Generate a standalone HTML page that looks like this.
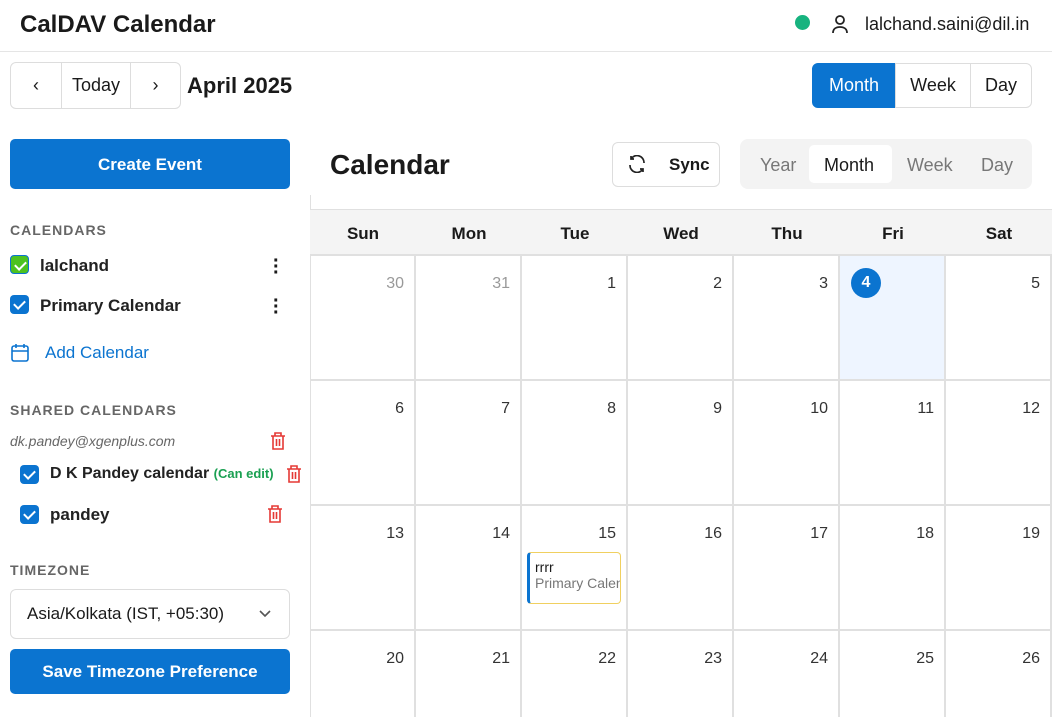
<!DOCTYPE html><html><head><style>
*{box-sizing:border-box;margin:0;padding:0}
html,body{width:1052px;height:717px;overflow:hidden}
body{background:#fff;font-family:"Liberation Sans","DejaVu Sans",sans-serif;color:#1a1a1a;position:relative}
.a{position:absolute}
.btn{position:absolute;border:1px solid #ddd;background:#fff;display:flex;align-items:center;justify-content:center;font-size:18px}
.cell{position:absolute;border-right:2px solid #e0e0e0;border-bottom:2px solid #e0e0e0;width:106px;height:125px}
.n{position:absolute;right:10px;top:19px;font-size:16px;color:#333}
.hd{position:absolute;top:210px;height:46px;width:106px;text-align:center;line-height:48px;font-size:17px;font-weight:bold;background:#f4f4f4;border-bottom:2px solid #e0e0e0}
.cb{position:absolute;width:19px;height:19px;border-radius:4px;background:#0b74d0}
.cb:after{content:"";position:absolute;left:6px;top:3px;width:5px;height:9px;border:solid #fff;border-width:0 2px 2px 0;transform:rotate(45deg)}
.lbl{position:absolute;font-size:17px;font-weight:bold;color:#222}
.sec{position:absolute;left:10px;font-size:14px;letter-spacing:1px;color:#666;font-weight:bold}
.dots{position:absolute;left:273px;width:4px;font-size:20px;font-weight:bold;line-height:6px}
</style></head><body>
<div class="a" style="left:20px;top:11px;font-size:24px;font-weight:bold">CalDAV Calendar</div>
<div class="a" style="left:795px;top:15px;width:15px;height:15px;border-radius:50%;background:#17b37f"></div>
<svg class="a" style="left:831px;top:14px" width="18" height="20" viewBox="0 0 18 20" fill="none" stroke="#222" stroke-width="1.8"><circle cx="9" cy="6" r="4"/><path d="M2 19c0-4 3-6 7-6s7 2 7 6"/></svg>
<div class="a" style="left:865px;top:14px;font-size:18px">lalchand.saini@dil.in</div>
<div class="a" style="left:0;top:51px;width:1052px;height:1px;background:#e5e5e5"></div>
<div class="btn" style="left:10px;top:62px;width:52px;height:47px;border-radius:6px 0 0 6px">‹</div>
<div class="btn" style="left:61px;top:62px;width:70px;height:47px">Today</div>
<div class="btn" style="left:130px;top:62px;width:51px;height:47px;border-radius:0 6px 6px 0">›</div>
<div class="a" style="left:187px;top:73px;font-size:22px;font-weight:bold">April 2025</div>
<div class="btn" style="left:812px;top:63px;width:84px;height:45px;background:#0b74d0;color:#fff;border-color:#0b74d0;border-radius:6px 0 0 6px">Month</div>
<div class="btn" style="left:895px;top:63px;width:76px;height:45px">Week</div>
<div class="btn" style="left:970px;top:63px;width:62px;height:45px;border-radius:0 6px 6px 0">Day</div>
<div class="a" style="left:10px;top:139px;width:280px;height:50px;background:#0b74d0;border-radius:5px;color:#fff;font-size:17px;font-weight:bold;text-align:center;line-height:52px">Create Event</div>
<div class="sec" style="top:222px">CALENDARS</div>
<div class="cb" style="left:10px;top:255px;background:#4dc21f;border:1px solid #0b74d0"></div><div class="lbl" style="left:40px;top:256px">lalchand</div><div class="dots" style="top:258px">·<br>·<br>·</div>
<div class="cb" style="left:10px;top:295px"></div><div class="lbl" style="left:40px;top:296px">Primary Calendar</div><div class="dots" style="top:298px">·<br>·<br>·</div>
<svg class="a" style="left:11px;top:343px" width="18" height="19" viewBox="0 0 18 19" fill="none" stroke="#0b74d0" stroke-width="1.6"><rect x="1" y="3" width="16" height="15" rx="2"/><path d="M1 8h16M5 1v4M13 1v4"/></svg>
<div class="a" style="left:45px;top:343px;font-size:17px;color:#0b74d0">Add Calendar</div>
<div class="sec" style="top:402px">SHARED CALENDARS</div>
<div class="a" style="left:10px;top:433px;font-size:14px;font-style:italic;color:#666">dk.pandey@xgenplus.com</div>
<div class="cb" style="left:20px;top:465px"></div><div class="lbl" style="left:50px;top:465px;font-size:16px">D K Pandey calendar <span style="font-size:13px;color:#1aa052">(Can edit)</span></div>
<div class="cb" style="left:20px;top:505px"></div><div class="lbl" style="left:50px;top:505px">pandey</div>
<svg class="a" style="left:270px;top:432px" width="16" height="18" viewBox="0 0 16 18" fill="none" stroke="#e53935" stroke-width="1.6"><path d="M1 4h14M5 4V1h6v3M3 4v13h10V4M6.5 7v7M9.5 7v7"/></svg>
<svg class="a" style="left:286px;top:465px" width="16" height="18" viewBox="0 0 16 18" fill="none" stroke="#e53935" stroke-width="1.6"><path d="M1 4h14M5 4V1h6v3M3 4v13h10V4M6.5 7v7M9.5 7v7"/></svg>
<svg class="a" style="left:267px;top:505px" width="16" height="18" viewBox="0 0 16 18" fill="none" stroke="#e53935" stroke-width="1.6"><path d="M1 4h14M5 4V1h6v3M3 4v13h10V4M6.5 7v7M9.5 7v7"/></svg>
<div class="sec" style="top:562px">TIMEZONE</div>
<div class="a" style="left:10px;top:589px;width:280px;height:50px;border:1px solid #ddd;border-radius:6px;font-size:17px;padding:14px 16px">Asia/Kolkata (IST, +05:30)<svg style="position:absolute;right:18px;top:20px" width="12" height="8" viewBox="0 0 12 8" fill="none" stroke="#555" stroke-width="1.6"><path d="M1 1l5 5 5-5"/></svg></div>
<div class="a" style="left:10px;top:649px;width:280px;height:45px;background:#0b74d0;border-radius:5px;color:#fff;font-size:17px;font-weight:bold;text-align:center;line-height:46px">Save Timezone Preference</div>
<div class="a" style="left:310px;top:195px;width:1px;height:522px;background:#e0e0e0"></div>
<div class="a" style="left:330px;top:149px;font-size:28px;font-weight:bold">Calendar</div>
<div class="btn" style="left:612px;top:142px;width:108px;height:45px;border-radius:6px;font-weight:bold;font-size:17px;justify-content:flex-start;padding-left:56px">Sync</div>
<svg class="a" style="left:627px;top:155px" width="20" height="18" viewBox="0 0 20 18" fill="none" stroke="#222" stroke-width="1.7"><path d="M17 8A7 7 0 0 0 4 4M3 10a7 7 0 0 0 13 4M4 1v3h3M16 17v-3h-3"/></svg>
<div class="a" style="left:740px;top:139px;width:292px;height:50px;background:#f3f3f3;border-radius:8px"></div>
<div class="a" style="left:809px;top:145px;width:83px;height:38px;background:#fff;border-radius:5px"></div>
<div class="a" style="left:760px;top:155px;font-size:18px;color:#777">Year</div>
<div class="a" style="left:824px;top:155px;font-size:18px">Month</div>
<div class="a" style="left:907px;top:155px;font-size:18px;color:#777">Week</div>
<div class="a" style="left:981px;top:155px;font-size:18px;color:#777">Day</div>
<div class="a" style="left:311px;top:209px;width:741px;height:1px;background:#e0e0e0"></div>
<div class="hd" style="left:310px">Sun</div><div class="hd" style="left:416px">Mon</div><div class="hd" style="left:522px">Tue</div><div class="hd" style="left:628px">Wed</div><div class="hd" style="left:734px">Thu</div><div class="hd" style="left:840px">Fri</div><div class="hd" style="left:946px">Sat</div>
<div id="g"></div>
<script>
var d=[[30,31,1,2,3,4,5],[6,7,8,9,10,11,12],[13,14,15,16,17,18,19],[20,21,22,23,24,25,26]],h='';
for(var r=0;r<4;r++)for(var c=0;c<7;c++){var x=310+c*106,y=256+r*125,v=d[r][c];
var bg=(r==0&&c==5)?'background:#eef5ff;':'';
if(r==3)bg+='height:86px;border-bottom:none;';
h+='<div class="cell" style="left:'+x+'px;top:'+y+'px;'+bg+'">';
if(r==0&&c==5)h+='<div style="position:absolute;left:11px;top:12px;width:30px;height:30px;border-radius:50%;background:#0b74d0;color:#fff;font-weight:bold;text-align:center;line-height:30px;font-size:16px">4</div>';
else h+='<div class="n" style="'+(r==0&&c<2?'color:#999':'')+'">'+v+'</div>';
if(r==2&&c==2)h+='<div style="position:absolute;left:5px;top:46px;width:94px;height:52px;border:1px solid #f0d060;border-left:3px solid #0b74d0;border-radius:4px;overflow:hidden;white-space:nowrap;padding:6px 0 0 5px;font-size:14px">rrrr<br><span style="color:#777">Primary Calendar</span></div>';
h+='</div>';}
document.getElementById('g').innerHTML=h;
</script>
</body></html>
